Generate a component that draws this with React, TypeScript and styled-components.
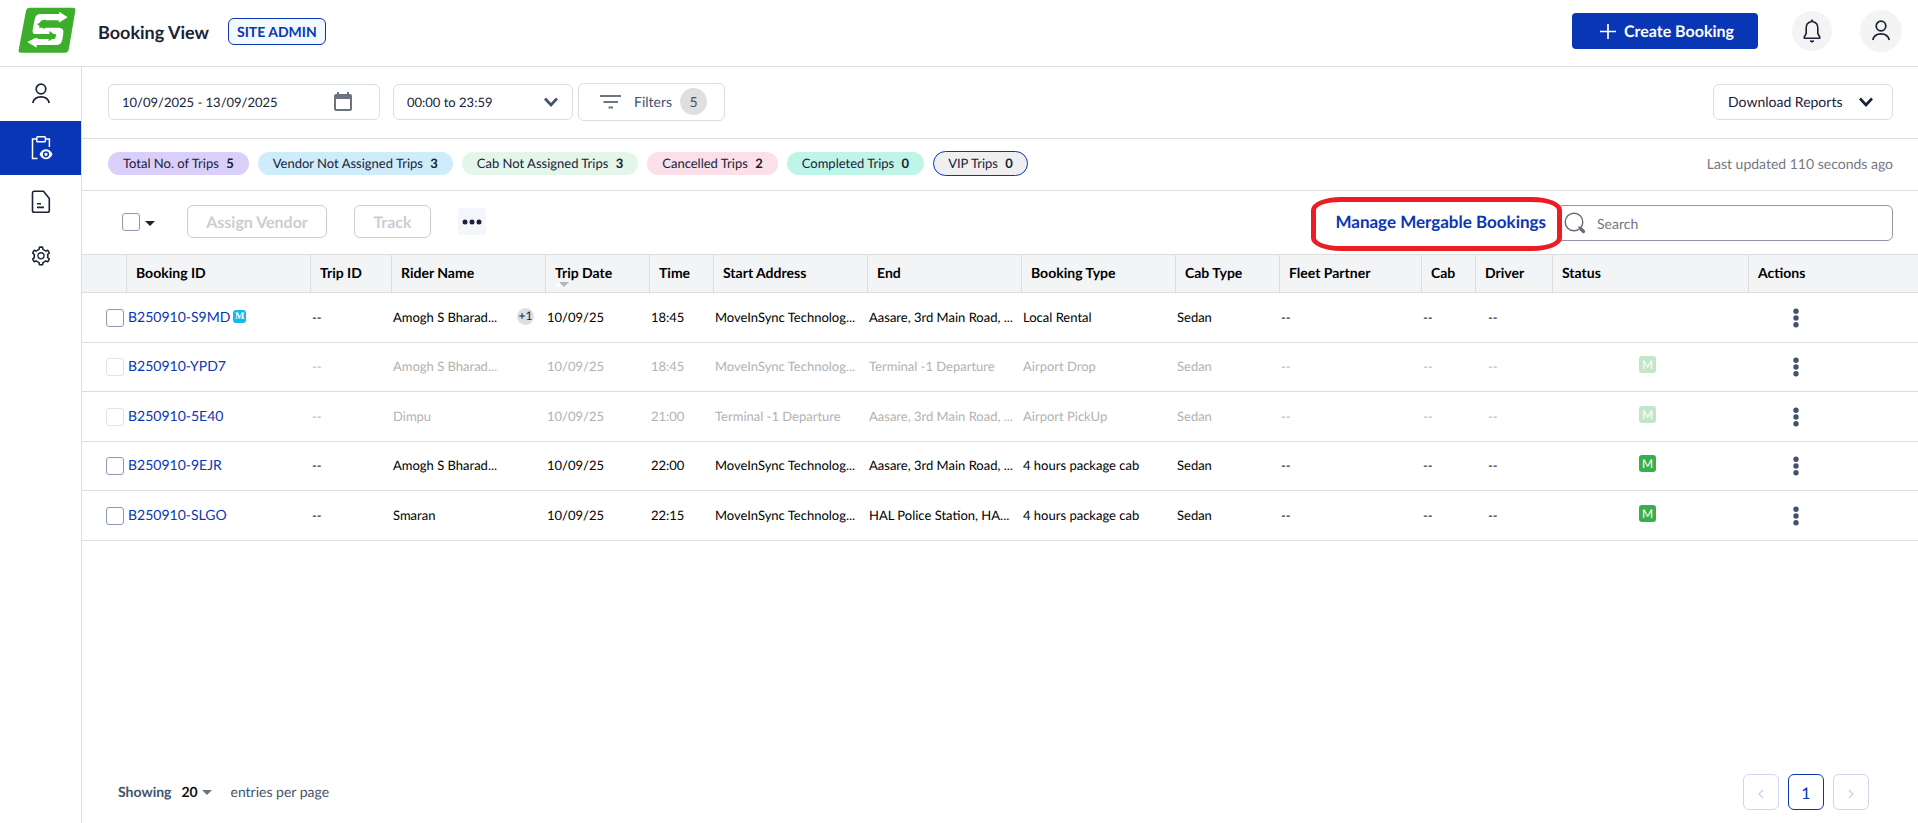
import React from "react";
import styled, { createGlobalStyle, css } from "styled-components";
import { AiOutlineSetting } from "react-icons/ai";

const blue = "#0936b4";
const ink = "#1a2138";
const slate = "#42526b";
const line = "#dcdddf";

const GlobalStyle = createGlobalStyle`
  *, *::before, *::after { box-sizing: border-box; }
  body {
    margin: 0;
    background: #fff;
    color: ${ink};
    font-family: Lato, "Liberation Sans", sans-serif;
    font-size: 14px;
    line-height: 20px;
    text-rendering: geometricPrecision;
  }
  button, input, select { font: inherit; color: inherit; margin: 0; text-rendering: inherit; }
  button { cursor: pointer; }
  svg { display: block; flex: none; }
`;

const Page = styled.div`
  display: flex;
  flex-direction: column;
  min-height: 100vh;
`;

const Header = styled.header`
  display: flex;
  align-items: center;
  height: 67px;
  padding: 0 16px 4px 18px;
  border-bottom: 1px solid ${line};
`;

const Title = styled.h1`
  margin: 2px 19px 0 20px;
  font-size: 18px;
  line-height: 24px;
  font-weight: 700;
`;

const RoleBadge = styled.span`
  padding: 2px 8px;
  height: 27px;
  line-height: 21px;
  border: 1px solid ${blue};
  border-radius: 6px;
  background: #f2f9ff;
  color: ${blue};
  font-weight: 700;
`;

const HeaderActions = styled.div`
  display: flex;
  align-items: center;
  margin-left: auto;
`;

const CreateButton = styled.button`
  display: flex;
  align-items: center;
  gap: 8px;
  height: 36px;
  margin-right: 34px;
  padding: 2px 24px 0 28px;
  border: 0;
  border-radius: 4px;
  background: ${blue};
  color: #fff;
  font-size: 16px;
  font-weight: 700;
`;

const RoundButton = styled.button<{ $size: number }>`
  display: grid;
  place-items: center;
  width: ${(p) => p.$size}px;
  height: ${(p) => p.$size}px;
  padding: 0;
  border: 0;
  border-radius: 50%;
  background: #f4f4f5;
  & + & { margin-left: 28px; }
`;

const Body = styled.div`
  display: flex;
  flex: 1;
`;

const Sidebar = styled.nav`
  flex: none;
  width: 82px;
  border-right: 1px solid ${line};
`;

const NavLink = styled.a<{ $active?: boolean }>`
  display: grid;
  place-items: center;
  height: 54px;
  color: ${(p) => (p.$active ? "#fff" : ink)};
  background: ${(p) => (p.$active ? blue : "transparent")};
`;

const Main = styled.main`
  display: flex;
  flex-direction: column;
  flex: 1;
  min-width: 0;
`;

const Bar = styled.section<{ $height: number }>`
  display: flex;
  align-items: center;
  height: ${(p) => p.$height}px;
  padding: 0 25px 2px 26px;
  border-bottom: 1px solid ${line};
`;

const fieldBox = css`
  display: flex;
  align-items: center;
  height: 36px;
  border: 1px solid ${line};
  border-radius: 6px;
  background: #fff;
`;

const DateField = styled.label`
  ${fieldBox}
  width: 272px;
  margin-right: 13px;
  padding: 0 27px 0 13px;
  font-size: 13px;
  input {
    flex: 1;
    min-width: 0;
    padding: 0;
    border: 0;
    outline: 0;
    background: none;
  }
`;

const TimeField = styled.label`
  ${fieldBox}
  width: 180px;
  margin-right: 5px;
  padding: 0 14px 0 13px;
  font-size: 13px;
  select {
    flex: 1;
    padding: 0;
    border: 0;
    appearance: none;
    background: none;
  }
`;

const FilterButton = styled.button`
  ${fieldBox}
  width: 147px;
  height: 38px;
  padding: 0 17px 0 21px;
  color: ${slate};
  span { margin-left: 13px; }
`;

const FilterCount = styled.b`
  width: 27px;
  height: 27px;
  margin-left: auto;
  border-radius: 50%;
  background: #dfdfdf;
  font-weight: 400;
  line-height: 27px;
`;

const DownloadButton = styled.button`
  ${fieldBox}
  justify-content: space-between;
  width: 180px;
  margin-left: auto;
  padding: 0 19px 0 14px;
`;

const Chips = styled.div`
  display: flex;
  gap: 9px;
`;

const Chip = styled.button<{ $bg: string; $outlined?: boolean }>`
  height: 23px;
  padding: 0 15px;
  border: 0;
  border-radius: 13px;
  background: ${(p) => p.$bg};
  font-size: 13px;
  line-height: 23px;
  white-space: nowrap;
  b { margin-left: 4px; }
  ${(p) =>
    p.$outlined &&
    css`
      height: 25px;
      margin: -1px 0;
      padding: 0 14px;
      border: 1px solid ${blue};
    `}
`;

const Updated = styled.span`
  margin-left: auto;
  color: #75787f;
`;

const Check = styled.input`
  appearance: none;
  display: block;
  width: 18px;
  height: 18px;
  margin: 0;
  border: 1px solid #8d9aab;
  border-radius: 3px;
  background: #fff;
  &:disabled { border-color: #dfe2e7; }
`;

const SelectAll = styled.div`
  display: flex;
  align-items: center;
  gap: 5px;
  margin: 0 32px 0 14px;
`;

const CaretButton = styled.button`
  padding: 4px 0 0;
  border: 0;
  background: none;
`;

const GhostButton = styled.button<{ $width: number }>`
  width: ${(p) => p.$width}px;
  height: 33px;
  margin-right: 27px;
  padding: 2px 0 0;
  border: 1px solid #c9cdd4;
  border-radius: 6px;
  background: #fff;
  color: #c9cdd4;
  font-size: 16px;
  font-weight: 700;
`;

const MoreButton = styled.button`
  display: grid;
  place-items: center;
  width: 28px;
  height: 27px;
  padding: 0;
  border: 0;
  border-radius: 3px;
  background: #f5f6fb;
`;

const MergeLink = styled.a`
  position: relative;
  margin: 0 11px 0 auto;
  color: ${blue};
  font-size: 17px;
  font-weight: 700;
  text-decoration: none;
  &::after {
    content: "";
    position: absolute;
    inset: -15px -16px -19px -24px;
    border: 5px solid #ed1c24;
    border-radius: 30px / 13px;
  }
`;

const SearchField = styled.label`
  ${fieldBox}
  width: 336px;
  margin-top: 2px;
  border-color: #9394a3;
  padding-left: 6px;
  input {
    flex: 1;
    min-width: 0;
    padding: 2px 11px 0;
    border: 0;
    outline: 0;
    background: none;
  }
  input::placeholder { color: #75787f; opacity: 1; }
`;

const Table = styled.table`
  width: 100%;
  table-layout: fixed;
  border-collapse: separate;
  border-spacing: 0;
  color: #000;
`;

const Th = styled.th`
  position: relative;
  height: 38px;
  padding: 0 0 2px 9px;
  border-right: 1px solid ${line};
  border-bottom: 1px solid ${line};
  background: #f3f4f6;
  font-weight: 700;
  text-align: left;
  white-space: nowrap;
  &:last-child { border-right: 0; }
`;

const SortMark = styled.svg`
  position: absolute;
  left: 9px;
  bottom: 5px;
`;

const Row = styled.tr<{ $muted?: boolean }>`
  height: 50px;
  color: ${(p) => (p.$muted ? "#b2b2b2" : "#000")};
  &:nth-child(even) { height: 49px; }
`;

const Td = styled.td<{ $indent?: number; $control?: boolean }>`
  padding: 0 0 ${(p) => (p.$control ? 0 : 2)}px ${(p) => p.$indent ?? 1}px;
  border-bottom: 1px solid ${line};
  font-size: 13px;
  white-space: nowrap;
`;

const BookingLink = styled.a`
  color: ${blue};
  font-size: 14px;
  text-decoration: none;
`;

const MergeTag = styled.span`
  display: inline-block;
  width: 13px;
  height: 13px;
  margin-left: 3px;
  border-radius: 3px;
  background: #12b9ec;
  color: #fff;
  font: bold 10px/13px "Liberation Serif", serif;
  text-align: center;
  vertical-align: 3px;
`;

const Rider = styled.div`
  display: flex;
  align-items: center;
  justify-content: space-between;
  padding-right: 12px;
`;

const ExtraCount = styled.span`
  width: 17px;
  height: 17px;
  border-radius: 50%;
  background: #dfdfdf;
  color: ${ink};
  font-size: 12px;
  line-height: 16px;
  text-align: center;
`;

const StatusTag = styled.span<{ $muted?: boolean }>`
  display: block;
  width: 17px;
  height: 17px;
  margin-bottom: 3px;
  border-radius: 3px;
  background: #37b04a;
  color: #fff;
  font-size: 12px;
  line-height: 17px;
  text-align: center;
  opacity: ${(p) => (p.$muted ? 0.3 : 1)};
`;

const KebabButton = styled.button`
  display: block;
  padding: 0;
  border: 0;
  background: none;
`;

const Footer = styled.footer`
  display: flex;
  align-items: center;
  margin-top: auto;
  padding: 0 49px 13px 36px;
  color: ${slate};
`;

const PageSize = styled.label`
  display: flex;
  align-items: center;
  b { margin-right: 10px; }
  select {
    width: 21px;
    padding: 0;
    border: 0;
    appearance: none;
    background: none;
    color: #111;
    font-weight: 700;
  }
  span { margin-left: 18px; }
`;

const Pager = styled.div`
  display: flex;
  gap: 9px;
  margin-left: auto;
`;

const PageButton = styled.button<{ $current?: boolean }>`
  display: grid;
  place-items: center;
  width: 36px;
  height: 36px;
  padding: 3px 0 0;
  border: 1px solid ${(p) => (p.$current ? blue : "#d0d8f0")};
  border-radius: 6px;
  background: #fff;
  color: ${(p) => (p.$current ? blue : "#c6d1ee")};
  font-size: 16px;
`;

const Logo = () => (
  <svg width="60" height="48" viewBox="0 0 180 144" role="img" aria-label="Home">
    <path
      d="M36 2H164Q174 2 172 11L152 129Q150 137 142 137H9Q0 137 2 129L24 11Q26 2 36 2Z"
      fill="#3dae2b"
    />
    <path
      d="M68 21H124V14L149 31L122 47V40H72Q68 40 67 46L63 62H122Q139 62 136 80L133 98Q130 114 114 114H56V122L28 105L59 89V96H111L114 82H54Q42 82 44 68L50 37Q53 21 68 21Z"
      fill="#fff"
    />
    <path d="M57 52L82 37V46H128V58H80V67Z" fill="#3dae2b" />
    <path d="M116 87L92 103V93H32V81H94V72Z" fill="#3dae2b" />
  </svg>
);

const PersonIcon = () => (
  <svg width="24" height="24" viewBox="0 0 24 24" fill="none" stroke="currentColor" strokeWidth="1.7">
    <circle cx="12" cy="7" r="4.8" />
    <path d="M3.8 21C4.6 17 8 14.8 12 14.8S19.4 17 20.2 21" />
  </svg>
);

const ClipboardEyeIcon = () => (
  <svg width="24" height="24" viewBox="0 0 24 24" fill="none" stroke="currentColor" strokeWidth="1.5">
    <path d="M8 3H3.5V22.6H8.5M16 3h4.4V11" />
    <rect x="7.8" y="0.8" width="8.6" height="5" rx="0.8" />
    <path
      d="M10.5 18.3C12 15 14.3 13.3 17 13.3s5 1.7 6.5 5C22 21.6 19.7 23.3 17 23.3s-5-1.7-6.5-5Z"
      fill="currentColor"
      stroke="none"
    />
    <circle cx="17" cy="18.3" r="2.4" stroke={blue} strokeWidth="1.5" />
  </svg>
);

const DocIcon = () => (
  <svg width="24" height="24" viewBox="0 0 24 24" fill="none" stroke="currentColor" strokeWidth="1.6" strokeLinejoin="round">
    <path d="M5 1.3H14.5L20.3 8.5V20.5Q20.3 22.3 18.5 22.3H5Q3.5 22.3 3.5 20.5V3Q3.5 1.3 5 1.3Z" />
    <path d="M8 13.7h4M8 17.4h7" />
  </svg>
);

const BellIcon = () => (
  <svg width="24" height="24" viewBox="0 0 24 24" fill="none" stroke="currentColor" strokeWidth="1.6" strokeLinejoin="round">
    <path d="M12 1.2L11 2.8C8 3.4 6.2 5.9 6.2 9v5.5L4.3 17.8V19.3H19.7V17.8L17.8 14.5V9C17.8 5.9 16 3.4 13 2.8Z" />
    <path d="M10 22h4L12 23.2Z" fill="currentColor" strokeWidth="1" />
  </svg>
);

const CalendarIcon = () => (
  <svg width="18" height="20" viewBox="0 0 18 20" fill="#6c7480">
    <path
      fillRule="evenodd"
      d="M3 0H5V2H13V0H15V2H16Q18 2 18 4V17Q18 19 16 19H2Q0 19 0 17V4Q0 2 2 2H3ZM2 7V17H16V7Z"
    />
  </svg>
);

const Chevron = ({ color }: { color: string }) => (
  <svg width="14" height="10" viewBox="0 0 14 10" fill="none" stroke={color} strokeWidth="2.6">
    <path d="M1 1.5L7 8L13 1.5" />
  </svg>
);

const PageArrow = ({ next }: { next?: boolean }) => (
  <svg width="6" height="10" viewBox="0 0 6 10" fill="none" stroke="currentColor" strokeWidth="1.3">
    <path d={next ? "M1 1L5 5L1 9" : "M5 1L1 5L5 9"} />
  </svg>
);

const Caret = ({ color }: { color: string }) => (
  <svg width="10" height="5" viewBox="0 0 10 5" fill={color}>
    <path d="M0 0H10L5 5Z" />
  </svg>
);

const FilterIcon = () => (
  <svg width="21" height="16" viewBox="0 0 21 16" stroke="#6c7480" strokeWidth="2">
    <path d="M0 2H21M3.5 8H18M8.5 13.5H13" />
  </svg>
);

const PlusIcon = () => (
  <svg width="16" height="16" viewBox="0 0 16 16" stroke="#fff" strokeWidth="1.7">
    <path d="M8 0V15M0 7.5H16" />
  </svg>
);

const SearchIcon = () => (
  <svg width="22" height="22" viewBox="0 0 22 22" fill="none" stroke="#666c78">
    <circle cx="10" cy="10" r="8.8" strokeWidth="1.4" />
    <path d="M14.5 14.5L17 17" strokeWidth="1.4" />
    <path d="M17 17L19.5 19.5" strokeWidth="3.2" strokeLinecap="round" />
  </svg>
);

const chips: { label: string; count: number; bg: string; outlined?: boolean }[] = [
  { label: "Total No. of Trips", count: 5, bg: "#d9cff8" },
  { label: "Vendor Not Assigned Trips", count: 3, bg: "#ceecfa" },
  { label: "Cab Not Assigned Trips", count: 3, bg: "#e3f6e9" },
  { label: "Cancelled Trips", count: 2, bg: "#fbe0e9" },
  { label: "Completed Trips", count: 0, bg: "#bff5e8" },
  { label: "VIP Trips", count: 0, bg: "#efefef", outlined: true },
];

const columns: [string, number][] = [
  ["", 45],
  ["Booking ID", 184],
  ["Trip ID", 81],
  ["Rider Name", 154],
  ["Trip Date", 104],
  ["Time", 64],
  ["Start Address", 154],
  ["End", 154],
  ["Booking Type", 154],
  ["Cab Type", 104],
  ["Fleet Partner", 142],
  ["Cab", 54],
  ["Driver", 77],
  ["Status", 196],
  ["Actions", 169],
];

interface Booking {
  id: string;
  merged?: boolean;
  rider: string;
  extra?: string;
  date: string;
  time: string;
  start: string;
  end: string;
  type: string;
  muted?: boolean;
  status?: string;
}

const office = "MoveInSync Technolog...";
const home = "Aasare, 3rd Main Road, ...";

const bookings: Booking[] = [
  { id: "B250910-S9MD", merged: true, rider: "Amogh S Bharad...", extra: "+1", date: "10/09/25", time: "18:45", start: office, end: home, type: "Local Rental" },
  { id: "B250910-YPD7", rider: "Amogh S Bharad...", date: "10/09/25", time: "18:45", start: office, end: "Terminal -1 Departure", type: "Airport Drop", muted: true, status: "M" },
  { id: "B250910-5E40", rider: "Dimpu", date: "10/09/25", time: "21:00", start: "Terminal -1 Departure", end: home, type: "Airport PickUp", muted: true, status: "M" },
  { id: "B250910-9EJR", rider: "Amogh S Bharad...", date: "10/09/25", time: "22:00", start: office, end: home, type: "4 hours package cab", status: "M" },
  { id: "B250910-SLGO", rider: "Smaran", date: "10/09/25", time: "22:15", start: office, end: "HAL Police Station, HA...", type: "4 hours package cab", status: "M" },
];

const BookingRow = ({ b }: { b: Booking }) => (
  <Row $muted={b.muted}>
    <Td $indent={24} $control>
      <Check type="checkbox" disabled={b.muted} aria-label={`Select ${b.id}`} />
    </Td>
    <Td>
      <BookingLink href="#">{b.id}</BookingLink>
      {b.merged && <MergeTag>M</MergeTag>}
    </Td>
    <Td>--</Td>
    <Td>
      <Rider>
        {b.rider}
        {b.extra && <ExtraCount>{b.extra}</ExtraCount>}
      </Rider>
    </Td>
    <Td>{b.date}</Td>
    <Td>{b.time}</Td>
    <Td>{b.start}</Td>
    <Td>{b.end}</Td>
    <Td>{b.type}</Td>
    <Td>Sedan</Td>
    <Td>--</Td>
    <Td>--</Td>
    <Td $indent={12}>--</Td>
    <Td $indent={86}>{b.status && <StatusTag $muted={b.muted}>{b.status}</StatusTag>}</Td>
    <Td $indent={44} $control>
      <KebabButton aria-label={`Actions for ${b.id}`}>
        <svg width="6" height="20" viewBox="0 0 6 20" fill={slate}>
          <circle cx="3" cy="3.3" r="2.7" />
          <circle cx="3" cy="10" r="2.7" />
          <circle cx="3" cy="16.7" r="2.7" />
        </svg>
      </KebabButton>
    </Td>
  </Row>
);

export default function App() {
  return (
    <Page>
      <GlobalStyle />
      <Header>
        <Logo />
        <Title>Booking View</Title>
        <RoleBadge>SITE ADMIN</RoleBadge>
        <HeaderActions>
          <CreateButton><PlusIcon />Create Booking</CreateButton>
          <RoundButton $size={40} aria-label="Notifications"><BellIcon /></RoundButton>
          <RoundButton $size={42} aria-label="Account"><PersonIcon /></RoundButton>
        </HeaderActions>
      </Header>
      <Body>
        <Sidebar>
          <NavLink href="#" aria-label="Users"><PersonIcon /></NavLink>
          <NavLink href="#" aria-label="Bookings" $active><ClipboardEyeIcon /></NavLink>
          <NavLink href="#" aria-label="Reports"><DocIcon /></NavLink>
          <NavLink href="#" aria-label="Settings"><AiOutlineSetting size={22} /></NavLink>
        </Sidebar>
        <Main>
          <Bar $height={72}>
            <DateField>
              <input type="text" aria-label="Date range" defaultValue="10/09/2025 - 13/09/2025" />
              <CalendarIcon />
            </DateField>
            <TimeField>
              <select aria-label="Time range"><option>00:00 to 23:59</option></select>
              <Chevron color={slate} />
            </TimeField>
            <FilterButton>
              <FilterIcon />
              <span>Filters</span>
              <FilterCount>5</FilterCount>
            </FilterButton>
            <DownloadButton>Download Reports<Chevron color={ink} /></DownloadButton>
          </Bar>
          <Bar $height={52}>
            <Chips>
              {chips.map((c) => (
                <Chip key={c.label} $bg={c.bg} $outlined={c.outlined}>
                  {c.label} <b>{c.count}</b>
                </Chip>
              ))}
            </Chips>
            <Updated>Last updated 110 seconds ago</Updated>
          </Bar>
          <Bar $height={64}>
            <SelectAll>
              <Check type="checkbox" aria-label="Select all bookings" />
              <CaretButton aria-label="Selection options"><Caret color={ink} /></CaretButton>
            </SelectAll>
            <GhostButton $width={140} disabled>Assign Vendor</GhostButton>
            <GhostButton $width={77} disabled>Track</GhostButton>
            <MoreButton aria-label="More actions">
              <svg width="20" height="6" viewBox="0 0 20 6" fill={ink}>
                <circle cx="3" cy="3" r="2.5" />
                <circle cx="10" cy="3" r="2.5" />
                <circle cx="17" cy="3" r="2.5" />
              </svg>
            </MoreButton>
            <MergeLink href="#">Manage Mergable Bookings</MergeLink>
            <SearchField>
              <SearchIcon />
              <input type="text" aria-label="Search" placeholder="Search" />
            </SearchField>
          </Bar>
          <Table>
            <colgroup>
              {columns.map(([name, width]) => <col key={name} width={width} />)}
            </colgroup>
            <thead>
              <tr>
                {columns.map(([name]) => (
                  <Th key={name} scope="col">
                    {name}
                    {name === "Trip Date" && (
                      <SortMark width="14" height="6" viewBox="0 0 14 6">
                        <path d="M0 6L5 0V6Z" fill="#fff" />
                        <path d="M4 1H14L9 6Z" fill="#b4b5ba" />
                      </SortMark>
                    )}
                  </Th>
                ))}
              </tr>
            </thead>
            <tbody>
              {bookings.map((b) => <BookingRow key={b.id} b={b} />)}
            </tbody>
          </Table>
          <Footer>
            <PageSize>
              <b>Showing</b>
              <select><option>20</option></select>
              <Caret color="#707276" />
              <span>entries per page</span>
            </PageSize>
            <Pager>
              <PageButton disabled aria-label="Previous page"><PageArrow /></PageButton>
              <PageButton $current>1</PageButton>
              <PageButton disabled aria-label="Next page"><PageArrow next /></PageButton>
            </Pager>
          </Footer>
        </Main>
      </Body>
    </Page>
  );
}
